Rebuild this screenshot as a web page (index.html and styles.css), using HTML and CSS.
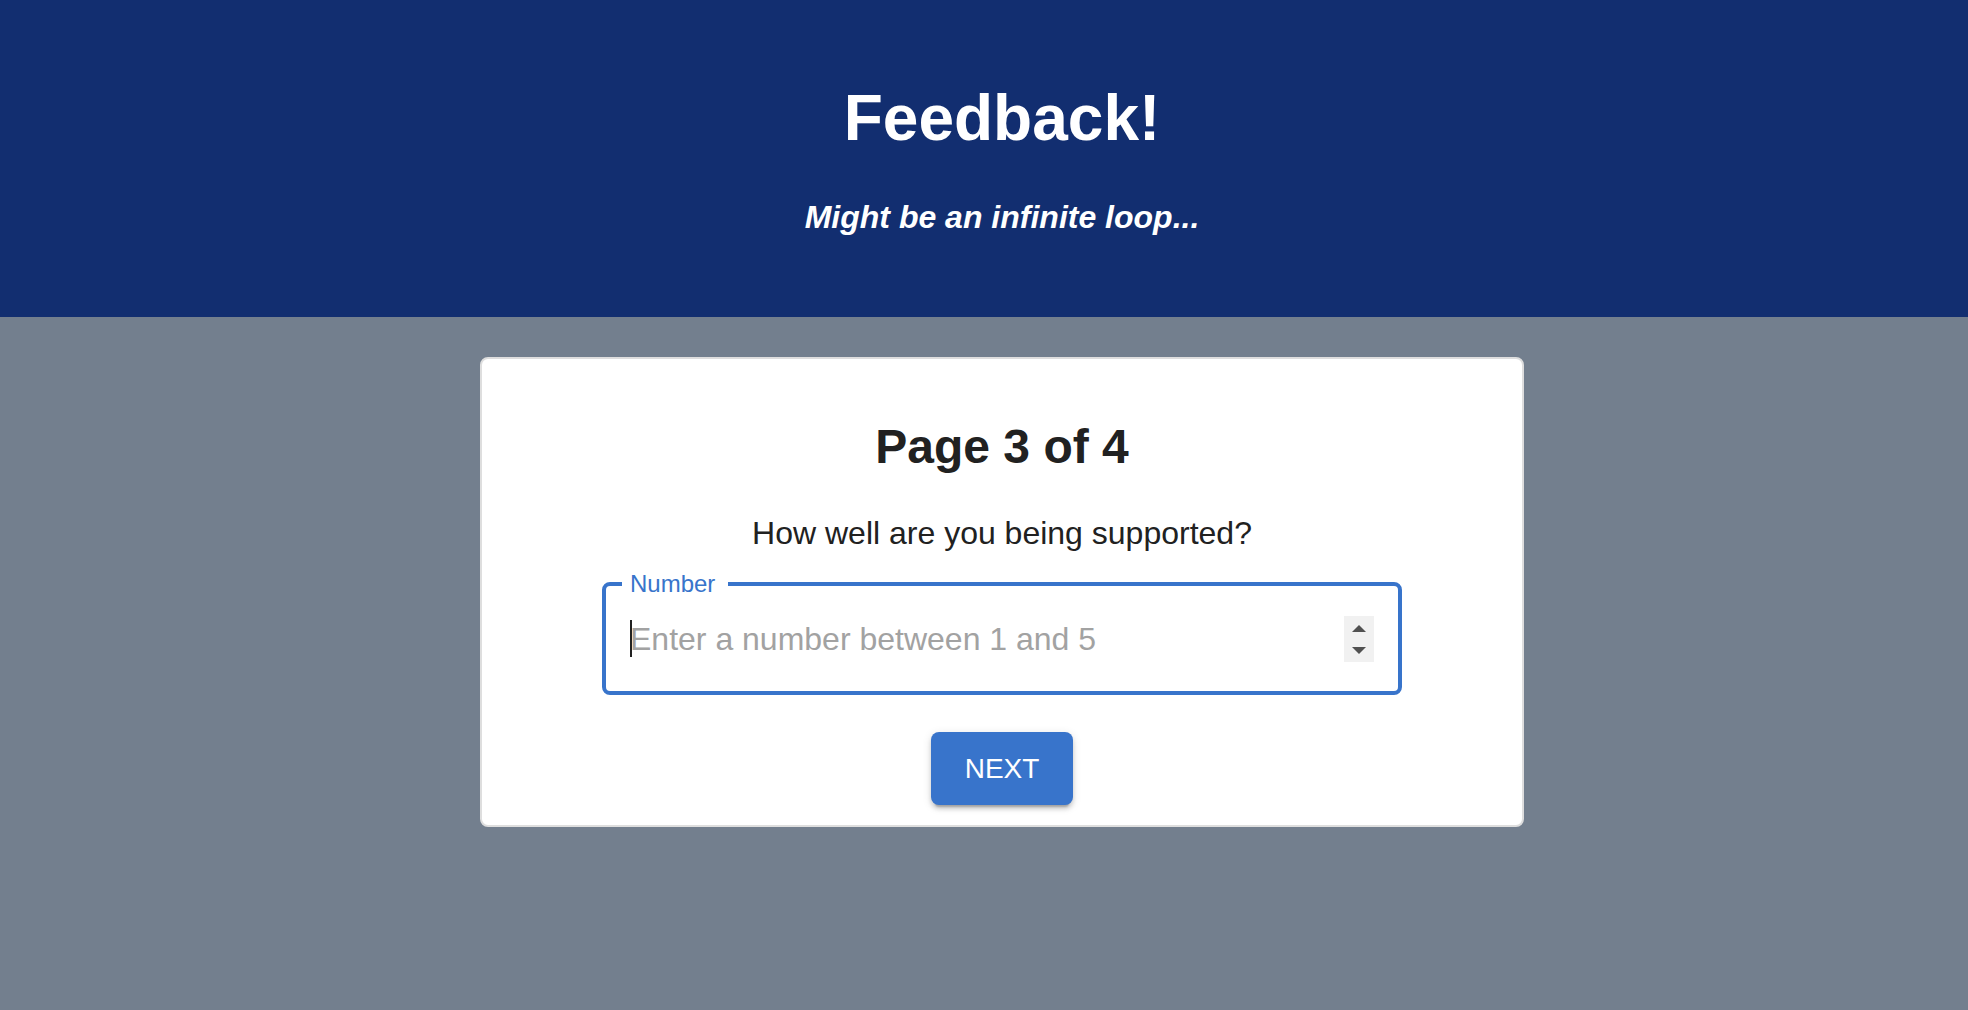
FILE: index.html
```html
<!DOCTYPE html>
<html lang="en">
<head>
<meta charset="utf-8">
<meta name="viewport" content="width=device-width, initial-scale=1">
<title>Feedback!</title>
<link rel="stylesheet" href="styles.css">
</head>
<body>
<header class="app-header">
  <h1 class="app-title">Feedback!</h1>
  <p class="app-subtitle">Might be an infinite loop...</p>
</header>
<main class="app-main">
  <form class="card">
    <h2 class="card-title">Page 3 of 4</h2>
    <p class="question">How well are you being supported?</p>
    <fieldset class="field">
      <legend class="field-legend"><label for="rating">Number</label></legend>
      <div class="field-row">
        <input class="field-input" id="rating" type="number" min="1" max="5" placeholder="Enter a number between 1 and 5">
        <span class="caret"></span>
        <div class="spinner">
          <button class="step" type="button" aria-label="Increase"><svg width="14" height="7" viewBox="0 0 14 7"><path d="M0 7L7 0L14 7Z"/></svg></button>
          <button class="step" type="button" aria-label="Decrease"><svg width="14" height="7" viewBox="0 0 14 7"><path d="M0 0L7 7L14 0Z"/></svg></button>
        </div>
      </div>
    </fieldset>
    <button class="next" type="button">NEXT</button>
  </form>
</main>
</body>
</html>
```
FILE: styles.css
```css
* {
  box-sizing: border-box;
}

body {
  margin: 0;
  min-height: 100vh;
  background: #737f8e;
  color: #212121;
  font-family: "Liberation Sans", Arial, Helvetica, sans-serif;
}

h1,
h2,
p {
  margin: 0;
}

.app-header {
  display: flex;
  flex-direction: column;
  align-items: center;
  gap: 44px;
  padding: 81px 0 81px 36px;
  background: #122e70;
  color: #fff;
  text-align: center;
}

.app-title {
  font-size: 64px;
  line-height: 74px;
}

.app-subtitle {
  font-size: 32px;
  line-height: 37px;
  font-weight: bold;
  font-style: italic;
}

.app-main {
  display: flex;
  justify-content: center;
  padding: 40px 0 40px 36px;
}

.card {
  display: flex;
  flex-direction: column;
  align-items: center;
  width: 100%;
  max-width: 1044px;
  padding: 60px 20px 20px;
  border: 2px solid #dedede;
  border-radius: 8px;
  background: #fff;
  text-align: center;
}

.card-title {
  margin-bottom: 40px;
  font-size: 48px;
  line-height: 56px;
}

.question {
  margin-bottom: 20px;
  font-size: 32px;
  line-height: 37px;
}

.field {
  width: 100%;
  max-width: 800px;
  min-width: 0;
  margin: 0 0 37px;
  padding: 20px 24px 29px 16px;
  border: 4px solid #3874cb;
  border-radius: 8px;
  text-align: left;
}

.field-legend {
  padding: 0 13px 0 8px;
  color: #3874cb;
  font-size: 24px;
  line-height: 24px;
}

.field-row {
  position: relative;
  display: flex;
  align-items: center;
  padding-left: 8px;
}

.field-input {
  flex: 1;
  min-width: 0;
  height: 46px;
  padding: 0;
  border: 0;
  outline: 0;
  background: none;
  color: #212121;
  font: inherit;
  font-size: 32px;
  appearance: textfield;
}

.field-input::placeholder {
  color: #a2a2a2;
  opacity: 1;
}

.caret {
  position: absolute;
  top: 4px;
  left: 8px;
  width: 2px;
  height: 37px;
  background: #212121;
}

.spinner {
  display: flex;
  flex-direction: column;
  width: 30px;
  background: #f1f1f1;
}

.step {
  display: flex;
  justify-content: center;
  align-items: flex-end;
  height: 23px;
  padding: 0 0 7px;
  border: 0;
  background: none;
  fill: #505050;
}

.step + .step {
  align-items: flex-start;
  padding: 8px 0 0;
}

.next {
  height: 73px;
  padding: 0 34px;
  border: 0;
  border-radius: 8px;
  background: #3874cb;
  box-shadow: 0 6px 2px -4px rgba(0, 0, 0, .2), 0 4px 4px rgba(0, 0, 0, .14), 0 2px 10px rgba(0, 0, 0, .12);
  color: #fff;
  font: inherit;
  font-size: 28px;
}
```
